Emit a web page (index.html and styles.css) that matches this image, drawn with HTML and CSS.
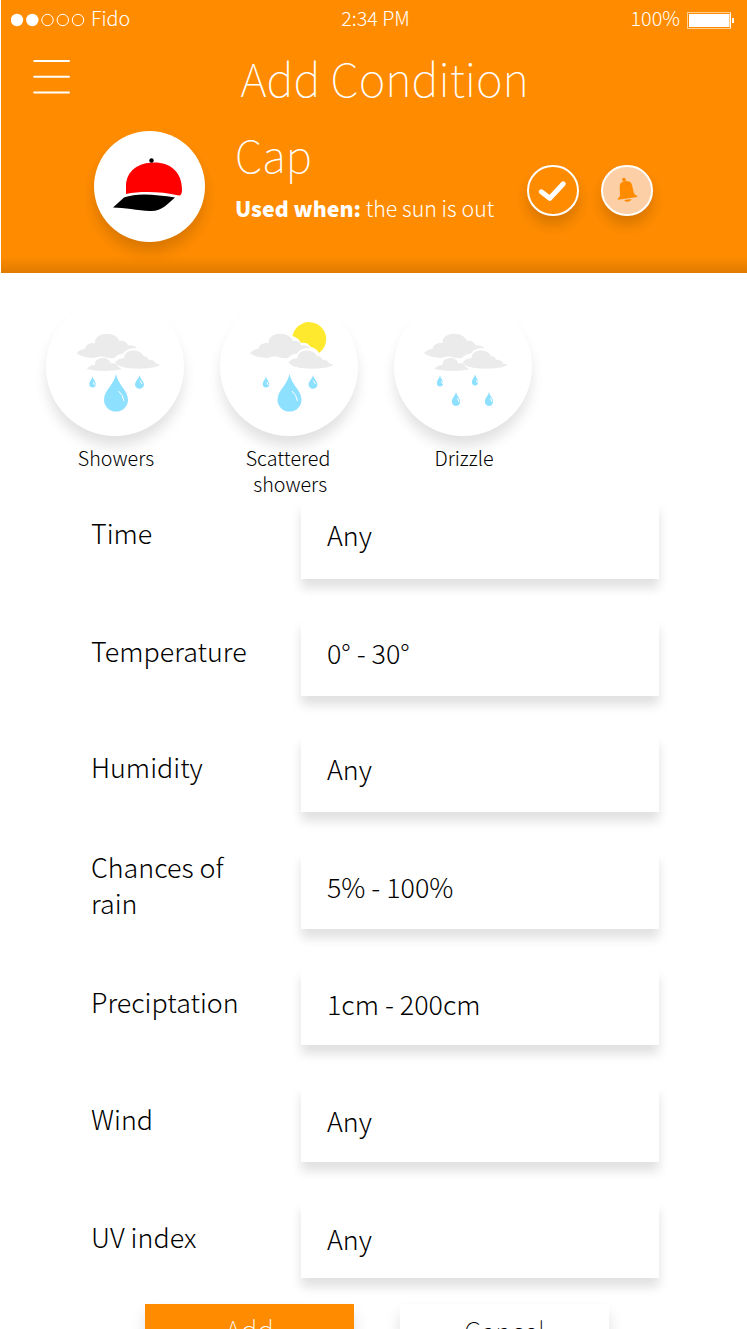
FILE: index.html
```html
<!DOCTYPE html>
<html lang="en">
<head>
<meta charset="utf-8">
<title>Add Condition</title>
<link rel="stylesheet" href="styles.css">
</head>
<body>
<svg class="defs" width="0" height="0">
  <defs>
    <path id="drop" d="M0-19C2-8 12-3 12 7A12 11.500 0 0 1-12 7C-12-3-2-8 0-19Z"/>
    <g id="clouds">
      <path d="M0 19.500C4 16 6 15.500 8.500 15.500C9 11 14 9 18.500 9.700C18 4 23 .2 30.500 .2C37 .2 41.500 3.500 43 7.500C47 6.500 50.500 9 51.500 12C55 11.500 58.500 12.500 60.500 14.800C54 14 49 16 47 20C43 20.500 40 22 38 24.500C34 25 31 24.500 28 23.500C24 22.500 20 23.500 18 24.500C9 24 3 22.500 0 19.500Z"/>
      <path d="M38.500 29C41 26 44 24.500 47.500 24.700C48 19 52 17 57 17C62 17 66 19.500 67 22.800C70 22.500 71.500 24 72 26.300C75 26 78.500 27 79 30C81 30 82.500 30.500 83.500 31.500C77 35 65 35.500 56 35C49 34.500 42 33.500 38.500 29Z"/>
    </g>
    <path id="low-cloud" d="M10.500 35.500C12 33 15 31.500 18.500 31.500C18 27 22 24.500 27 24.500C31 24.500 34 27 34 30C38 29 41 30.500 41.500 33C43 34 44.500 35 45 36C36 38 19 38 10.500 35.500Z"/>
  </defs>
</svg>
<main class="app">
  <header class="header">
    <div class="status">
      <div class="carrier">
        <svg width="75" height="14" viewBox="0 0 75 14"><g fill="#fff"><circle cx="6" cy="7" r="6.200"/><circle cx="21.300" cy="7" r="6.200"/></g><g fill="none" stroke="#fff"><circle cx="36.500" cy="7" r="5.700"/><circle cx="51.800" cy="7" r="5.700"/><circle cx="67" cy="7" r="5.700"/></g></svg>
        <span class="status-text">Fido</span>
      </div>
      <span class="status-text clock">2:34 PM</span>
      <div class="battery">
        <span class="status-text">100%</span>
        <svg width="48" height="17" viewBox="0 0 48 17"><rect x=".5" y=".5" width="43" height="16" fill="none" stroke="#ffcf94"/><rect x="2" y="2" width="40.500" height="13" fill="#fff"/><path d="M43.500 1V16" stroke="#fff"/><rect x="45" y="6" width="2" height="5" fill="#fff"/></svg>
      </div>
    </div>
    <div class="titlebar">
      <svg class="menu" width="38" height="36" viewBox="0 0 38 36"><path d="M1.200 2H36M1.200 17.800H36M1.200 33.500H36" stroke="#fff" stroke-width="2" stroke-linecap="round"/></svg>
      <h1 class="title">Add Condition</h1>
    </div>
    <div class="item">
      <div class="avatar">
        <svg width="112" height="112" viewBox="1 .5 112 112"><path d="M33 63.500V56C33 40 46 32 61 32C78 32 89 42 89 59C89 63 88 65 86 65C68 61 48 60.500 33 63.500Z" fill="red"/><circle cx="58.500" cy="30" r="2.200"/><path d="M20 77L31 67C44 62 63 64 82 67C75 73 69 81 57 80.500C45 80 31 77 20 77Z"/></svg>
      </div>
      <div class="about">
        <h2 class="name">Cap</h2>
        <p class="when"><b>Used when:</b> <span>the sun is out</span></p>
      </div>
      <div class="badge check"><svg width="48" height="48" viewBox=".7 .7 48 48"><path d="M13 25.500L21.500 32L35 17.500" fill="none" stroke="#fff" stroke-width="5" stroke-linecap="round" stroke-linejoin="round"/></svg></div>
      <div class="badge bell"><svg width="48" height="48" viewBox=".5 .5 48 48"><g fill="#ff8c00" transform="rotate(-8 24 24)"><circle cx="23" cy="12.800" r="1.900"/><path d="M17 28C18 18 17 15 24 14.500C31 15 30 18 31 28C32 30 34 30 34 32H14C14 30 16 30 17 28ZM20.500 33H27.500C27 36 21 36 20.500 33Z"/></g></svg></div>
    </div>
  </header>

  <section class="conditions">
    <figure class="cond">
      <div class="disc"><svg width="138" height="138" viewBox="0 0 138 138"><g fill="#ebebeb" transform="translate(30.5 35.500)"><use href="#clouds"/><use href="#low-cloud"/></g><g fill="#8ee0ff"><use href="#drop" transform="translate(70 95)"/><use href="#drop" transform="translate(46.500 84) scale(.27 .3)"/><use href="#drop" transform="translate(93.500 84) scale(.37 .37)"/></g><path d="M72.500 93Q77 97 78 103M47.500 84L48.500 87M94 82.500L96 86" fill="none" stroke="#fff"/></svg></div>
      <figcaption>Showers</figcaption>
    </figure>
    <figure class="cond">
      <div class="disc"><svg width="138" height="138" viewBox="0 0 138 138"><path d="M72.500 38A17 17 0 1 1 99 55C97 51 94 50 91 49C88 45 85 44 81 45C79 41 76 39 72.500 38Z" fill="#ffe92e"/><g fill="#ebebeb" transform="translate(30 35.500)"><use href="#clouds"/></g><g fill="#8ee0ff"><use href="#drop" transform="translate(69.500 95)"/><use href="#drop" transform="translate(46 84) scale(.27 .3)"/><use href="#drop" transform="translate(93 84) scale(.37 .37)"/></g><path d="M72 93Q76.500 97 77.500 103M47 84L48 87M93.500 82.500L95.500 86" fill="none" stroke="#fff"/></svg></div>
      <figcaption>Scattered<br>&nbsp;showers</figcaption>
    </figure>
    <figure class="cond">
      <div class="disc"><svg width="138" height="138" viewBox="0 0 138 138"><g fill="#ebebeb" transform="translate(30 35.500)"><use href="#clouds"/><use href="#low-cloud"/></g><g fill="#8ee0ff"><use href="#drop" transform="translate(46 83) scale(.26 .3)"/><use href="#drop" transform="translate(81 82) scale(.26 .3)"/><use href="#drop" transform="translate(62 101) scale(.34 .38)"/><use href="#drop" transform="translate(95 101) scale(.34 .38)"/></g><path d="M47.500 83L48.500 86M82.500 82L83.500 85M63.500 100L65 104M96.500 100L98 104" fill="none" stroke="#fff"/></svg></div>
      <figcaption>Drizzle</figcaption>
    </figure>
  </section>

  <section class="form">
    <div class="row"><div class="label">Time</div><div class="field">Any</div></div>
    <div class="row"><div class="label">Temperature</div><div class="field">0° - 30°</div></div>
    <div class="row"><div class="label">Humidity</div><div class="field">Any</div></div>
    <div class="row two"><div class="label">Chances of<br>rain</div><div class="field">5% - 100%</div></div>
    <div class="row"><div class="label">Preciptation</div><div class="field">1cm - 200cm</div></div>
    <div class="row"><div class="label">Wind</div><div class="field">Any</div></div>
    <div class="row"><div class="label">UV index</div><div class="field">Any</div></div>
  </section>

  <div class="actions">
    <div class="btn add">Add</div>
    <div class="btn cancel">Cancel</div>
  </div>
</main>
</body>
</html>
```
FILE: styles.css
```css
* { box-sizing: border-box; }
body { margin: 0; background: #fff; color: #000; font-family: "Noto Sans CJK SC", "Noto Sans CJK JP", "Open Sans", sans-serif; font-weight: 300; }
h1, h2, p, figure { margin: 0; font-weight: inherit; }
svg { display: block; flex: none; }
.defs { position: absolute; }
.app { width: 747px; height: 1329px; overflow: hidden; display: flex; flex-direction: column; }

.header { margin-left: 1px; height: 273px; flex: none; color: #fff; background: linear-gradient(to top, #e07b00, #ff8c00 17px); }
.status { height: 40px; display: grid; grid-template-columns: 1fr auto 1fr; align-items: center; padding: 0 12px 0 10px; font-size: 19.8px; line-height: 36px; }
.status-text { padding-bottom: 4px; }
.clock { padding-left: 5px; }
.carrier, .battery { display: flex; align-items: center; gap: 5px; white-space: nowrap; }
.battery { justify-content: flex-end; gap: 7px; }
.titlebar { height: 80px; display: flex; align-items: flex-start; padding: 15px 0 0 32px; }
.menu { margin-top: 4px; }
.title { margin-left: 169.5px; font-size: 45.4px; line-height: 44px; font-weight: 100; white-space: nowrap; }
.item { display: flex; align-items: flex-start; padding: 10.5px 0 0 92.5px; }
.avatar { width: 111.5px; height: 111.5px; border-radius: 50%; background: #fff; box-shadow: 0 10px 14px rgba(0, 0, 0, .15); }
.about { width: 292px; margin-left: 30px; white-space: nowrap; }
.name { margin-top: -5px; font-size: 44px; line-height: 56px; font-weight: 100; }
.when { margin-top: 4px; font-size: 21.35px; line-height: 44px; }
.when b { font-weight: 900; }
.badge { width: 51.5px; height: 51.5px; margin-top: 34px; border: 2px solid #fff; border-radius: 50%; box-shadow: 0 9px 14px rgba(0, 0, 0, .16); background: #ff8c00; }
.bell { margin-left: 22.5px; background: #fccfa6; }

.conditions { height: 229px; flex: none; display: flex; gap: 36px; padding: 25px 0 0 46px; }
.cond { width: 138px; text-align: center; font-size: 19.7px; line-height: 26px; }
.cond figcaption { margin: 0 -1px 0 1px; }
.cond:nth-child(2) figcaption { margin: 0 1px 0 -1px; }
.disc { width: 138px; height: 138px; border-radius: 50%; background: #fff; box-shadow: 0 11px 14px -1px rgba(0, 0, 0, .12); margin-bottom: 9px; }

.form { flex: none; height: 802px; font-size: 26.85px; line-height: 36px; }
.row { height: 116.5px; display: flex; align-items: flex-start; padding-left: 91px; }
.label { width: 210px; padding-top: calc(13.4px + var(--drift, 0px)); }
.two .label { margin-top: -18px; }
.field { width: 358px; height: 77px; padding: calc(15.4px + var(--drift, 0px)) 0 0 26px; background: #fff; box-shadow: 0 9px 10px rgba(0, 0, 0, .12); white-space: nowrap; }
.row:nth-child(2) { --drift: .7px; }
.row:nth-child(3) { --drift: 1px; }
.row:nth-child(4) { --drift: 2.1px; }
.row:nth-child(5) { --drift: 2.2px; }
.row:nth-child(6) { --drift: 3.4px; }
.row:nth-child(7) { --drift: 4.6px; }

.actions { display: flex; gap: 46px; padding-left: 145px; font-size: 27.5px; line-height: 50px; text-align: center; font-weight: 100; }
.btn { width: 209px; height: 70px; flex: none; box-shadow: 0 9px 14px rgba(0, 0, 0, .12); }
.add { background: #ff8c00; color: #fff; }
.cancel { background: #fff; font-size: 27px; line-height: 54px; }
```
